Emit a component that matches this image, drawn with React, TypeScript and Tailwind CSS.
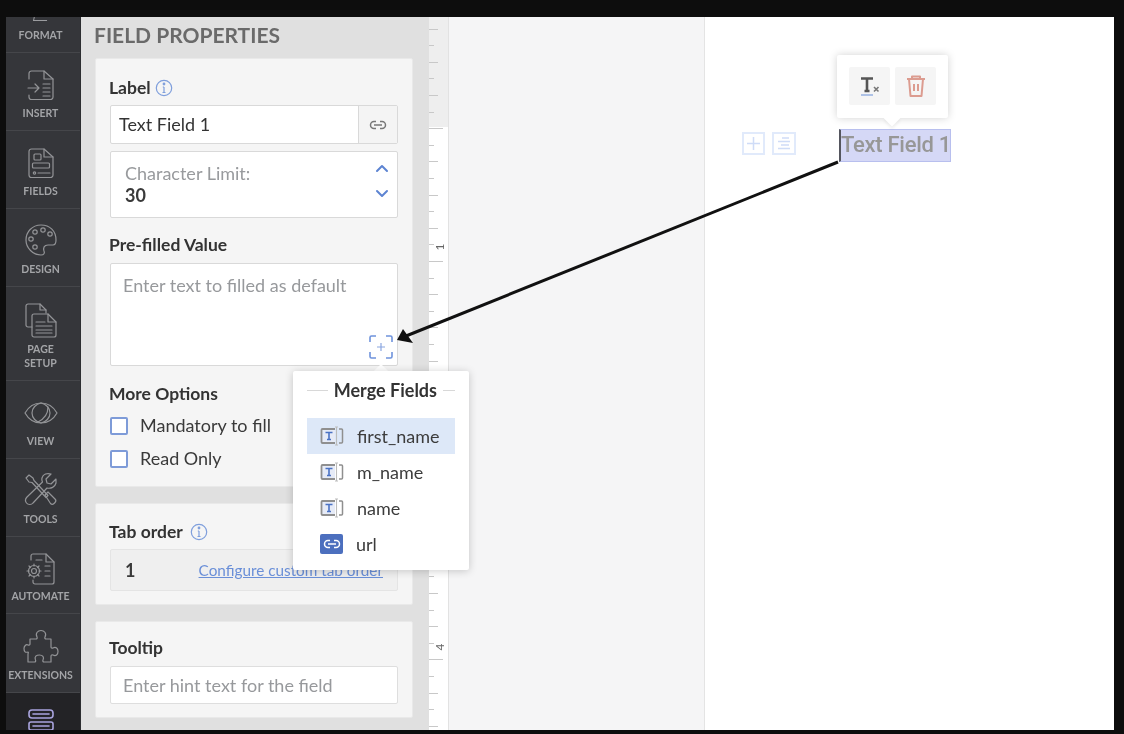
import React from "react";

const S = ({ children, w = 32, h = 32 }: { children: React.ReactNode; w?: number; h?: number }) => (
  <svg width={w} height={h} viewBox={`0 0 ${w} ${h}`} fill="none" stroke="#939497" strokeWidth="1.200" strokeLinecap="round" strokeLinejoin="round">
    {children}
  </svg>
);

const InsertIcon = () => (
  <S w={28} h={32}>
    <path d="M2 10V4.500A2.500 2.500 0 0 1 4.500 2H17l9 8v18a2.500 2.500 0 0 1-2.500 2.500h-19A2.500 2.500 0 0 1 2 28v-2" />
    <path d="M17 2v8h9" />
    <path d="M1 19h11M8 15l4 4-4 4" />
    <path d="M16 15h7M16 19h7M16 23h7M16 27h7" />
  </S>
);
const FieldsIcon = () => (
  <S w={28} h={32}>
    <path d="M2 4.500A2.500 2.500 0 0 1 4.500 2H17l9 8v18a2.500 2.500 0 0 1-2.500 2.500h-19A2.500 2.500 0 0 1 2 28z" />
    <path d="M17 2v8h9" />
    <rect x="7" y="7" width="7" height="6" rx="1" />
    <rect x="5.500" y="16" width="17" height="5" rx="1" />
    <circle cx="7.500" cy="26" r="1.200" />
    <path d="M11 26h12" />
  </S>
);
const DesignIcon = () => (
  <S w={34} h={34}>
    <path d="M17 2C8 2 2 9 2 17c0 8 7 15 15 15 3 0 4-2 3-4-1-3 0-6 4-6h5c2 0 3-2 3-5C32 8 26 2 17 2z" />
    <circle cx="11" cy="9" r="2.200" />
    <circle cx="19" cy="7" r="2.200" />
    <circle cx="26" cy="11" r="2.200" />
    <circle cx="7" cy="16" r="2.200" />
    <circle cx="11" cy="24" r="2.200" />
  </S>
);
const PageIcon = () => (
  <S w={34} h={36}>
    <path d="M8 24H4a2 2 0 0 1-2-2V3a2 2 0 0 1 2-2h12l6 6v3" />
    <path d="M16 1v6h6" />
    <path d="M8 13a2 2 0 0 1 2-2h14l8 8v13a2 2 0 0 1-2 2H10a2 2 0 0 1-2-2z" />
    <path d="M24 11v8h8" />
    <path d="M12 19h9M12 23h16M12 27h16M12 30h16" />
  </S>
);
const ViewIcon = () => (
  <S w={36} h={24}>
    <path d="M2 12C6 5 12 2 18 2s12 3 16 10c-4 7-10 10-16 10S6 19 2 12z" />
    <path d="M18 2c5 1 9 5 9 10s-4 9-9 10c-5-1-9-5-9-10s4-9 9-10z" />
    <path d="M25 6c0 7-4 12-10 15" />
  </S>
);
const ToolsIcon = () => (
  <S w={34} h={34}>
    <path d="M5 2 2 5l3 4 3 .500 14 15 2-2L10 7.500 9 5z" />
    <path d="m21 22 3-3 7 7c1 1 1 2.500 0 3.500l-1 1c-1 1-2.500 1-3.500 0z" />
    <path d="M32 6l-5 5-4-1-1-4 5-5c-4-1-8 0-9 4-.5 2 0 3 .5 4L3 24c-2 2-2 4-.5 6s5 2 6.500 0l14-15c4 1 8-1 9-5z" />
  </S>
);
const AutomateIcon = () => (
  <S w={30} h={34}>
    <path d="M5 8V4a2 2 0 0 1 2-2h13l8 8v20a2 2 0 0 1-2 2H9a2 2 0 0 1-2-2v-2" />
    <path d="M20 2v8h8" />
    <path d="M10 8h6" />
    <circle cx="8" cy="19" r="2.500" />
    <path d="M8 12v2M8 24v2M1 19h2M13 19h2M3 14l1.500 1.500M11.500 22.500 13 24M13 14l-1.500 1.500M4.500 22.500 3 24" />
    <circle cx="8" cy="19" r="5.500" />
    <path d="M19 14h5M19 19h5M19 24h5" />
  </S>
);
const ExtensionsIcon = () => (
  <S w={36} h={36}>
    <path d="M14 8c-2-4 1-6.500 4-6.500S24 4 22 8c-.5 1 0 2 1 2h5v8c0 1 1 1.500 2 1 3-1.500 5 .500 5 3.500s-2 5-5 3.500c-1-.5-2 0-2 1v6h-7c-1 0-1.500-1-1-2 1.500-3-.5-5-3.500-5S11 27.500 12.500 31c.5 1 0 2-1 2H5v-8c0-1 1-1.500 0-2-3 1-4-1-4-3.500S3 15 5 16c1 .5 2 0 2-1v-5h6c1 0 1.500-1 1-2z" />
  </S>
);
const ActiveIcon = () => (
  <S w={30} h={30}>
    <g stroke="#a9a4de" strokeWidth="1.600">
      <rect x="3" y="1" width="24" height="8" rx="3" />
      <path d="M7 5h16" />
      <rect x="3" y="13" width="24" height="8" rx="2" />
      <path d="M7 17h16" />
    </g>
  </S>
);

const items = [
  { label: ["INSERT"], icon: <InsertIcon />, h: "h-[78px]", gap: "gap-[5px]" },
  { label: ["FIELDS"], icon: <FieldsIcon />, h: "h-[78px]", gap: "gap-[5px]" },
  { label: ["DESIGN"], icon: <DesignIcon />, h: "h-[78px]", gap: "gap-[5px]" },
  { label: ["PAGE", "SETUP"], icon: <PageIcon />, h: "h-[94px]", gap: "gap-[3px]" },
  { label: ["VIEW"], icon: <ViewIcon />, h: "h-[78px]", gap: "gap-[9px]" },
  { label: ["TOOLS"], icon: <ToolsIcon />, h: "h-[78px]", gap: "gap-[5px]" },
  { label: ["AUTOMATE"], icon: <AutomateIcon />, h: "h-[77px]", gap: "gap-[3px]" },
  { label: ["EXTENSIONS"], icon: <ExtensionsIcon />, h: "h-[79px]", gap: "gap-[3px]" },
];

const Info = () => (
  <svg width="18" height="18" viewBox="0 0 18 18" fill="none" stroke="#7f9fdc" strokeWidth="1.200">
    <circle cx="9" cy="9" r="7.700" />
    <path d="M9 8v5.500M7.500 13.500h3M7.800 8H9" />
    <circle cx="9" cy="5" r=".8" fill="#7f9fdc" />
  </svg>
);

const LinkIcon = ({ color = "#777" }: { color?: string }) => (
  <svg width="18" height="10" viewBox="0 0 18 10" fill="none" stroke={color} strokeWidth="1.500">
    <path d="M7 1.500H5a3.500 3.500 0 0 0 0 7h2M11 1.500h2a3.500 3.500 0 0 1 0 7h-2M5 5h8" />
  </svg>
);

const TextFieldIcon = () => (
  <svg width="24" height="20" viewBox="0 0 24 20" fill="none">
    <path d="M15 3H2.500a1 1 0 0 0-1 1v12a1 1 0 0 0 1 1H15" stroke="#8f8f8f" strokeWidth="1.800" fill="#e6ebf7" />
    <path d="M19 3h2.500a1 1 0 0 1 1 1v12a1 1 0 0 1-1 1H19" stroke="#8f8f8f" strokeWidth="1.500" />
    <path d="M15 1h3M16.500 1v18M15 19h3" stroke="#bcbcbc" strokeWidth="1.100" />
    <path d="M5.500 6.500h7M9 6.500v7M7 13.500h4" stroke="#4a72c4" strokeWidth="1.600" />
  </svg>
);

const Check = ({ label }: { label: string }) => (
  <div className="flex items-center gap-[12px] h-[33px]">
    <div className="w-[18px] h-[18px] bg-white border-2 border-[#7e9bd8] rounded-[2px]" />
    <span className="text-[#3a3a3a] text-[18px]">{label}</span>
  </div>
);

const Heading = ({ children }: { children: React.ReactNode }) => (
  <div className="flex items-center gap-[4px] text-[#333] text-[17.500px] font-bold h-[20px] -ml-px">{children}</div>
);

const ticks = Array.from({ length: 43 }, (_, i) => i);

const Row = ({ name, active, url }: { name: string; active?: boolean; url?: boolean }) => (
  <div className={`flex items-center h-[36px] pl-[13px] gap-[13px] ${active ? "bg-[#dde8f8]" : ""}`}>
    {url ? (
      <div className="w-[23px] h-[20px] bg-[#4c6fbe] rounded-[2px] flex items-center justify-center">
        <LinkIcon color="#ffffff" />
      </div>
    ) : (
      <TextFieldIcon />
    )}
    <span className="text-[#3c3c3c] text-[18px]">{name}</span>
  </div>
);

export default function App() {
  return (
    <div className="relative w-[1124px] h-[734px] bg-[#0d0d0d] pt-[17px] pl-[6px] pr-[10px] pb-[4px] overflow-hidden font-['Lato',sans-serif]">
      <div className="relative flex h-full overflow-hidden bg-white blur-[0.5px]">
        {/* Sidebar */}
        <nav className="w-[75px] shrink-0 bg-[#35363a] flex flex-col border-r border-[#2c2d30]">
          <div className="h-[36px] shrink-0 flex flex-col items-center justify-end pb-[10px] pr-[5px] border-b border-[#45464a] relative overflow-hidden">
            <div className="absolute top-[-6px] left-[28px] w-[14px] h-[10px] border-b border-l border-[#9b9c9f] -skew-x-12" />
            <span className="text-[10.500px] leading-[14px] font-bold text-[#a3a4a7]">FORMAT</span>
          </div>
          {items.map((it) => (
            <div key={it.label[0]} className={`${it.h} shrink-0 flex flex-col items-center justify-end pb-[10px] pr-[5px] border-b border-[#45464a] ${it.gap}`}>
              {it.icon}
              <div className="text-center">
                {it.label.map((l) => (
                  <div key={l} className="text-[10.500px] leading-[14px] font-bold text-[#a3a4a7] whitespace-nowrap">{l}</div>
                ))}
              </div>
            </div>
          ))}
          <div className="flex-1 bg-[#232326] flex justify-center pt-[16px] pr-[5px] overflow-hidden">
            <ActiveIcon />
          </div>
        </nav>

        {/* Panel */}
        <aside className="w-[348px] shrink-0 bg-[#e0e0e0] pl-[14px] pr-[16px] h-full overflow-hidden">
          <h1 className="h-[36px] mb-[5px] flex items-center text-[21px] font-bold text-[#6a6a6a] -ml-px whitespace-nowrap">FIELD PROPERTIES</h1>
          <section className="h-[429px] bg-[#f5f5f5] border border-[#e9e9e9] rounded-[2px] px-[14px] pt-[19px]">
            <Heading>Label <Info /></Heading>
            <div className="flex h-[39px] mt-[7px] border border-[#d9d9d9] rounded-[2px] bg-white">
              <div className="flex-1 pl-[8px] flex items-center text-[18px] text-[#333]">Text Field 1</div>
              <div className="w-[39px] border-l border-[#d9d9d9] bg-[#f4f4f4] flex items-center justify-center"><LinkIcon /></div>
            </div>
            <div className="relative h-[67px] mt-[7px] border border-[#d9d9d9] rounded-[2px] bg-white pl-[14px] pt-[11px]">
              <div className="text-[18px] leading-[20px] text-[#989a9d]">Character Limit:</div>
              <div className="text-[18px] leading-[24px] font-bold text-[#3a3a3a]">30</div>
              <svg className="absolute right-[8px] top-[12px]" width="14" height="34" viewBox="0 0 14 34" fill="none" stroke="#5d84d2" strokeWidth="2" strokeLinecap="round" strokeLinejoin="round">
                <path d="m2 7 5-5 5 5M2 27l5 5 5-5" />
              </svg>
            </div>
            <div className="mt-[17px]"><Heading>Pre-filled Value</Heading></div>
            <div className="relative h-[103px] mt-[8px] border border-[#d9d9d9] rounded-[2px] bg-white pl-[12px] pt-[9px] text-[18px] leading-[24px] text-[#97999c]">
              Enter text to filled as default
              <svg className="absolute right-[4px] bottom-[6px]" width="24" height="24" viewBox="0 0 24 24" fill="none" stroke="#6f93dc" strokeWidth="1.600">
                <path d="M1 7V2.500A1.500 1.500 0 0 1 2.500 1H7M17 1h4.500A1.500 1.500 0 0 1 23 2.500V7M23 17v4.500a1.500 1.500 0 0 1-1.500 1.500H17M7 23H2.500A1.500 1.500 0 0 1 1 21.500V17" />
                <path d="M12 8v8M8 12h8" strokeWidth="1.200" stroke="#8aa6e0" />
              </svg>
            </div>
            <div className="mt-[18px] mb-[5px]"><Heading>More Options</Heading></div>
            <Check label="Mandatory to fill" />
            <Check label="Read Only" />
          </section>
          <section className="h-[102px] mt-[16px] bg-[#f5f5f5] border border-[#e9e9e9] rounded-[2px] px-[14px] pt-[18px]">
            <Heading>Tab order <span className="ml-[3px] flex"><Info /></span></Heading>
            <div className="h-[42px] mt-[7px] bg-[#efefef] border border-[#e4e4e4] rounded-[2px] flex items-center justify-between pl-[14px] pr-[14px]">
              <span className="text-[18px] font-bold text-[#3a3a3a]">1</span>
              <span className="text-[15.300px] text-[#6a8fd8] underline">Configure custom tab order</span>
            </div>
          </section>
          <section className="h-[97px] mt-[16px] bg-[#f5f5f5] border border-[#e9e9e9] rounded-[2px] px-[14px] pt-[16px]">
            <Heading>Tooltip</Heading>
            <div className="h-[38px] mt-[8px] bg-white border border-[#dedede] rounded-[2px] flex items-center pl-[12px] text-[18px] text-[#97999c]">
              Enter hint text for the field
            </div>
          </section>
        </aside>

        {/* Ruler */}
        <div className="relative w-[20px] shrink-0 bg-white border-r border-[#e2e2e2] overflow-hidden">
          <div className="h-[110px] bg-[#eeeeee]" />
          {ticks.map((i) => (
            <div key={i} className="absolute left-0 h-px bg-[#c8c8c8]" style={{ top: 11.6 + i * 16.6, width: i % 8 === 6 ? 14 : i % 2 === 0 ? 9 : 5 }} />
          ))}
          <span className="absolute left-[8px] top-[222px] text-[12px] leading-[16px] text-[#666] -rotate-90">1</span>
          <span className="absolute left-[8px] top-[622px] text-[12px] leading-[16px] text-[#666] -rotate-90">4</span>
        </div>

        {/* Canvas */}
        <main className="relative flex-1 flex bg-[#f5f5f6]">
          <div className="w-[255px] shrink-0" />
          <div className="flex-1 bg-white border-l border-[#e4e4e4]" />

          <div className="absolute left-[293px] top-[115px] flex gap-[7px]">
            <div className="w-[23px] h-[23px] border-2 border-[#e1eafb] flex items-center justify-center">
              <svg width="15" height="15" viewBox="0 0 15 15" stroke="#cfdcf7" strokeWidth="1.500"><path d="M7.500 1v13M1 7.500h13" /></svg>
            </div>
            <div className="w-[24px] h-[23px] border-2 border-[#e1eafb] flex items-center justify-center">
              <svg width="16" height="14" viewBox="0 0 16 14" stroke="#cfdcf7" strokeWidth="1.400"><path d="M6 1h7M2 4.500h12M5 8h8M2 11.500h12" /></svg>
            </div>
          </div>

          {/* Selected field */}
          <div className="absolute left-[390px] top-[112px] w-[112px] h-[33px] bg-[#d5d8f6] border border-[#b8bfee] border-l-2 border-l-[#55565e] flex items-center pb-[2px] text-[22px] font-medium tracking-[-0.3px] font-['Roboto',sans-serif] text-[#979797] whitespace-nowrap">
            Text Field 1
          </div>

          {/* Field toolbar */}
          <div className="absolute left-[388px] top-[38px] w-[111px] h-[63px] bg-white shadow-[0_0_8px_rgba(0,0,0,0.18)] rounded-[2px] flex gap-[5px] px-[12px] pt-[12px]">
            <div className="w-[41px] h-[38px] bg-[#f5f5f5] rounded-[2px] flex items-center justify-center">
              <svg width="24" height="24" viewBox="0 0 24 24" fill="none">
                <path d="M3 4.500h12M9 4v13M6.500 17h5" stroke="#555" strokeWidth="2.600" />
                <path d="M16 13l4.500 4.500M20.500 13 16 17.500" stroke="#777" strokeWidth="1.600" />
                <path d="M3 21h12" stroke="#7f9fdc" strokeWidth="1.200" />
              </svg>
            </div>
            <div className="w-[41px] h-[38px] bg-[#f5f5f5] rounded-[2px] flex items-center justify-center">
              <svg width="22" height="24" viewBox="0 0 22 24" fill="none" stroke="#dc9c90" strokeWidth="2" strokeLinejoin="round">
                <path d="M2 5h18M7 5V2.500h8V5M4 5l1.500 17h11L18 5" />
                <path d="M9 10v7M13 10v7" />
              </svg>
            </div>
          </div>
          <div className="absolute left-[437px] top-[95px] w-[12px] h-[12px] bg-white rotate-45 shadow-[2px_2px_3px_rgba(0,0,0,0.06)]" />
        </main>

        {/* Merge fields popover */}
        <div className="absolute left-[370px] top-[349px] w-[10px] h-[10px] bg-white rotate-45 z-10" />
        <div className="absolute left-[287px] top-[354px] w-[176px] h-[199px] bg-white rounded-[2px] shadow-[0_1px_8px_rgba(0,0,0,0.2)] z-10 px-[14px]">
          <div className="flex items-center h-[38px] gap-[6px] text-[18px] font-bold text-[#333]">
            <div className="flex-1 h-px bg-[#d8d8d8]" />
            <span className="whitespace-nowrap">Merge Fields</span>
            <div className="w-[12px] h-px bg-[#d8d8d8]" />
          </div>
          <div className="mt-[9px]">
            <Row name="first_name" active />
            <Row name="m_name" />
            <Row name="name" />
            <Row name="url" url />
          </div>
        </div>

        {/* Annotation arrow */}
        <svg className="absolute left-0 top-0 z-20 pointer-events-none" width="1108" height="713" viewBox="0 0 1108 713" fill="none">
          <path d="M832 145 400 319" stroke="#111111" strokeWidth="3" />
          <path d="M391 323 397 312 407 326z" fill="#111111" />
        </svg>
      </div>
    </div>
  );
}
